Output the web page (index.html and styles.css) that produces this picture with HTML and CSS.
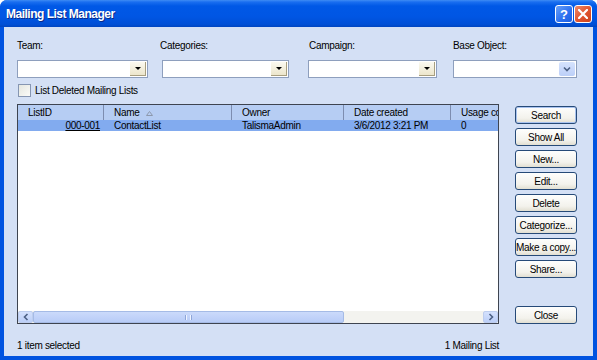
FILE: index.html
```html
<!DOCTYPE html>
<html lang="en">
<head>
    <meta charset="UTF-8">
    <meta name="viewport" content="width=device-width, initial-scale=1.0">
    <title>Mailing List Manager</title>
    <link rel="stylesheet" href="styles.css">
</head>
<body>
    <div class="window">
        <div class="titlebar">
            <span class="title">Mailing List Manager</span>
            <div class="caption-buttons">
                <span class="cap-btn help">?</span>
                <span class="cap-btn close">
                    <svg width="10" height="10" viewBox="0 0 10 10"><path d="M1 1 L9 9 M9 1 L1 9" stroke="#fff" stroke-width="2.2" stroke-linecap="square"/></svg>
                </span>
            </div>
        </div>

        <div class="client">
            <div class="filters">
                <div class="field">
                    <label>Team:</label>
                    <div class="combo combo-team"><span class="drop"><i class="tri"></i></span></div>
                </div>
                <div class="field">
                    <label>Categories:</label>
                    <div class="combo combo-cat"><span class="drop"><i class="tri"></i></span></div>
                </div>
                <div class="field">
                    <label>Campaign:</label>
                    <div class="combo combo-camp"><span class="drop"><i class="tri"></i></span></div>
                </div>
                <div class="field">
                    <label>Base Object:</label>
                    <div class="combo combo-base">
                        <span class="drop-xp">
                            <svg width="8" height="6" viewBox="0 0 8 6"><path d="M1 1.5 L4 4.5 L7 1.5" fill="none" stroke="#4d6185" stroke-width="1.6"/></svg>
                        </span>
                    </div>
                </div>
            </div>

            <label class="check"><span class="box"></span>List Deleted Mailing Lists</label>

            <div class="main">
                <div class="listview">
                    <div class="lv-header">
                        <div class="cell col-id">ListID</div>
                        <div class="cell col-name">Name
                            <svg class="sort" width="7" height="5" viewBox="0 0 7 5"><path d="M3.5 0.5 L6.5 4.5 L0.5 4.5 Z" fill="none" stroke="#8c98ad" stroke-width="1"/></svg>
                        </div>
                        <div class="cell col-owner">Owner</div>
                        <div class="cell col-date">Date created</div>
                        <div class="cell col-usage">Usage count</div>
                    </div>
                    <div class="lv-row selected">
                        <div class="cell col-id num"><u>000-001</u></div>
                        <div class="cell col-name">ContactList</div>
                        <div class="cell col-owner">TalismaAdmin</div>
                        <div class="cell col-date">3/6/2012 3:21 PM</div>
                        <div class="cell col-usage">0</div>
                    </div>
                    <div class="lv-body"></div>
                    <div class="hscroll">
                        <span class="sb-arrow">
                            <svg width="6" height="8" viewBox="0 0 6 8"><path d="M4.5 1 L1.5 4 L4.5 7" fill="none" stroke="#4d6185" stroke-width="1.6"/></svg>
                        </span>
                        <div class="sb-track">
                            <div class="sb-thumb"><span class="grip"></span></div>
                        </div>
                        <span class="sb-arrow">
                            <svg width="6" height="8" viewBox="0 0 6 8"><path d="M1.5 1 L4.5 4 L1.5 7" fill="none" stroke="#4d6185" stroke-width="1.6"/></svg>
                        </span>
                    </div>
                </div>

                <div class="actions">
                    <button class="btn default">Search</button>
                    <button class="btn">Show All</button>
                    <button class="btn">New...</button>
                    <button class="btn">Edit...</button>
                    <button class="btn">Delete</button>
                    <button class="btn">Categorize...</button>
                    <button class="btn">Make a copy...</button>
                    <button class="btn">Share...</button>
                    <button class="btn close-btn">Close</button>
                </div>
            </div>

            <div class="status">
                <span>1 item selected</span>
                <span>1 Mailing List</span>
            </div>
        </div>
    </div>
</body>
</html>
```

FILE: styles.css
```css
* {
    margin: 0;
    padding: 0;
    box-sizing: border-box;
}

body {
    font-family: "Liberation Sans", Arial, sans-serif;
    font-size: 10px;
    letter-spacing: -0.3px;
    color: #000;
    background: #fff;
}

.window {
    width: 597px;
    height: 360px;
    display: flex;
    flex-direction: column;
    background: #0053e0;
    border-radius: 7px 7px 0 0;
    overflow: hidden;
}

/* title bar */
.titlebar {
    height: 27px;
    flex: none;
    display: flex;
    align-items: center;
    justify-content: space-between;
    padding: 0 5px 0 6px;
    background: linear-gradient(#3f8cf3 0, #1a6ef0 2px, #0058e6 6px, #0056e4 60%, #004fd6 90%, #0045c0 100%);
}

.title {
    color: #fff;
    font-weight: bold;
    font-size: 12px;
    letter-spacing: -0.5px;
    text-shadow: 1px 1px 0 #0a2a8a;
    margin-top: 1px;
}

.caption-buttons {
    display: flex;
    gap: 1px;
    margin-top: 1px;
}

.cap-btn {
    width: 18px;
    height: 18px;
    border: 1px solid #fff;
    border-radius: 3px;
    display: flex;
    align-items: center;
    justify-content: center;
    color: #fff;
    font-weight: bold;
    font-size: 13px;
    letter-spacing: 0;
}

.cap-btn.help {
    background: linear-gradient(135deg, #6aa0f8, #2a6ff0 60%, #1e5ee0);
}

.cap-btn.close {
    background: linear-gradient(135deg, #ee8a6a, #e0532d 55%, #c9421e);
}

/* dialog body */
.client {
    flex: 1;
    margin: 0 4px 4px 4px;
    background: #d4e0f5;
    padding: 12px 0 0 13px;
    display: flex;
    flex-direction: column;
}

.filters {
    display: grid;
    grid-template-columns: 143px 149px 144px 124px;
}

.field label {
    display: block;
    line-height: 14px;
    height: 14px;
}

.combo {
    margin-top: 7px;
    height: 18px;
    background: #fff;
    border: 1px solid #8e9fbd;
    position: relative;
}

.combo-team { width: 131px; }
.combo-cat { width: 127px; margin-left: 2px; }
.combo-camp { width: 129px; margin-left: -1px; }
.combo-base { width: 124px; }

.drop {
    position: absolute;
    right: 1px;
    top: 1px;
    bottom: 1px;
    width: 16px;
    background: linear-gradient(#fbf9f0, #ece6cc);
    border-right: 1px solid #a89f80;
    border-bottom: 1px solid #a89f80;
    display: flex;
    align-items: center;
    justify-content: center;
}

.tri {
    width: 0;
    height: 0;
    border-left: 3px solid transparent;
    border-right: 3px solid transparent;
    border-top: 3px solid #000;
}

.drop-xp {
    position: absolute;
    right: 1px;
    top: 1px;
    bottom: 1px;
    width: 16px;
    background: linear-gradient(#d6e3fd, #bccff8);
    border-radius: 2px;
    display: flex;
    align-items: center;
    justify-content: center;
}

.check {
    display: flex;
    align-items: center;
    gap: 4px;
    margin-top: 6px;
    height: 13px;
    padding-left: 1px;
}

.box {
    width: 13px;
    height: 13px;
    border: 1px solid #8696b2;
    background: linear-gradient(135deg, #e4e6e0, #fbfbf8);
}

/* list + buttons */
.main {
    display: flex;
    margin-top: 7px;
    height: 220px;
}

.listview {
    width: 482px;
    height: 220px;
    border: 1px solid #3e4450;
    background: #fff;
    display: flex;
    flex-direction: column;
    overflow: hidden;
}

.lv-header,
.lv-row {
    display: flex;
    white-space: nowrap;
}

.lv-header {
    height: 15px;
    background: #b6cdf3;
    line-height: 15px;
}

.lv-header .cell {
    border-right: 1px solid #7d8db0;
}

.lv-row {
    height: 11px;
    line-height: 11px;
}

.lv-row.selected {
    background: #82abef;
}

.cell {
    flex: none;
    padding-left: 10px;
    overflow: hidden;
}

.col-id { width: 86px; }
.col-name { width: 128px; }
.col-owner { width: 112px; }
.col-date { width: 107px; }
.col-usage { width: 60px; }

.cell.num {
    text-align: right;
    padding-right: 4px;
}

.sort {
    margin-left: 4px;
    vertical-align: 0;
}

.lv-body {
    flex: 1;
}

.hscroll {
    height: 12px;
    display: flex;
    background: #f3f3ef;
}

.sb-arrow {
    width: 15px;
    flex: none;
    background: linear-gradient(#d4e1fd, #bccff8);
    border: 1px solid #bdcdee;
    border-radius: 2px;
    display: flex;
    align-items: center;
    justify-content: center;
}

.sb-track {
    flex: 1;
}

.sb-thumb {
    width: 311px;
    height: 100%;
    background: linear-gradient(#cbdafb, #b8ccf7);
    border: 1px solid #a5bbe6;
    border-radius: 2px;
    display: flex;
    align-items: center;
    justify-content: center;
}

.grip {
    width: 5px;
    height: 5px;
    border-left: 1px solid #eef3ff;
    border-right: 1px solid #eef3ff;
    box-shadow: -1px 0 0 #8ea6d8, 1px 0 0 #8ea6d8;
}

.actions {
    margin-left: 16px;
    padding-top: 2px;
    display: flex;
    flex-direction: column;
    gap: 4px;
}

.btn {
    width: 62px;
    height: 18px;
    font-family: inherit;
    font-size: 10px;
    letter-spacing: -0.3px;
    color: #000;
    background: linear-gradient(#fefefd, #f3f2ec 70%, #e2dfd2);
    border: 1px solid #264a78;
    border-radius: 3px;
    white-space: nowrap;
    overflow: hidden;
    padding: 0;
}

.btn.default {
    box-shadow: inset 0 0 0 1px #a9c3ef;
}

.close-btn {
    margin-top: auto;
}

.status {
    width: 482px;
    display: flex;
    justify-content: space-between;
    margin-top: 15px;
    line-height: 13px;
}
```
